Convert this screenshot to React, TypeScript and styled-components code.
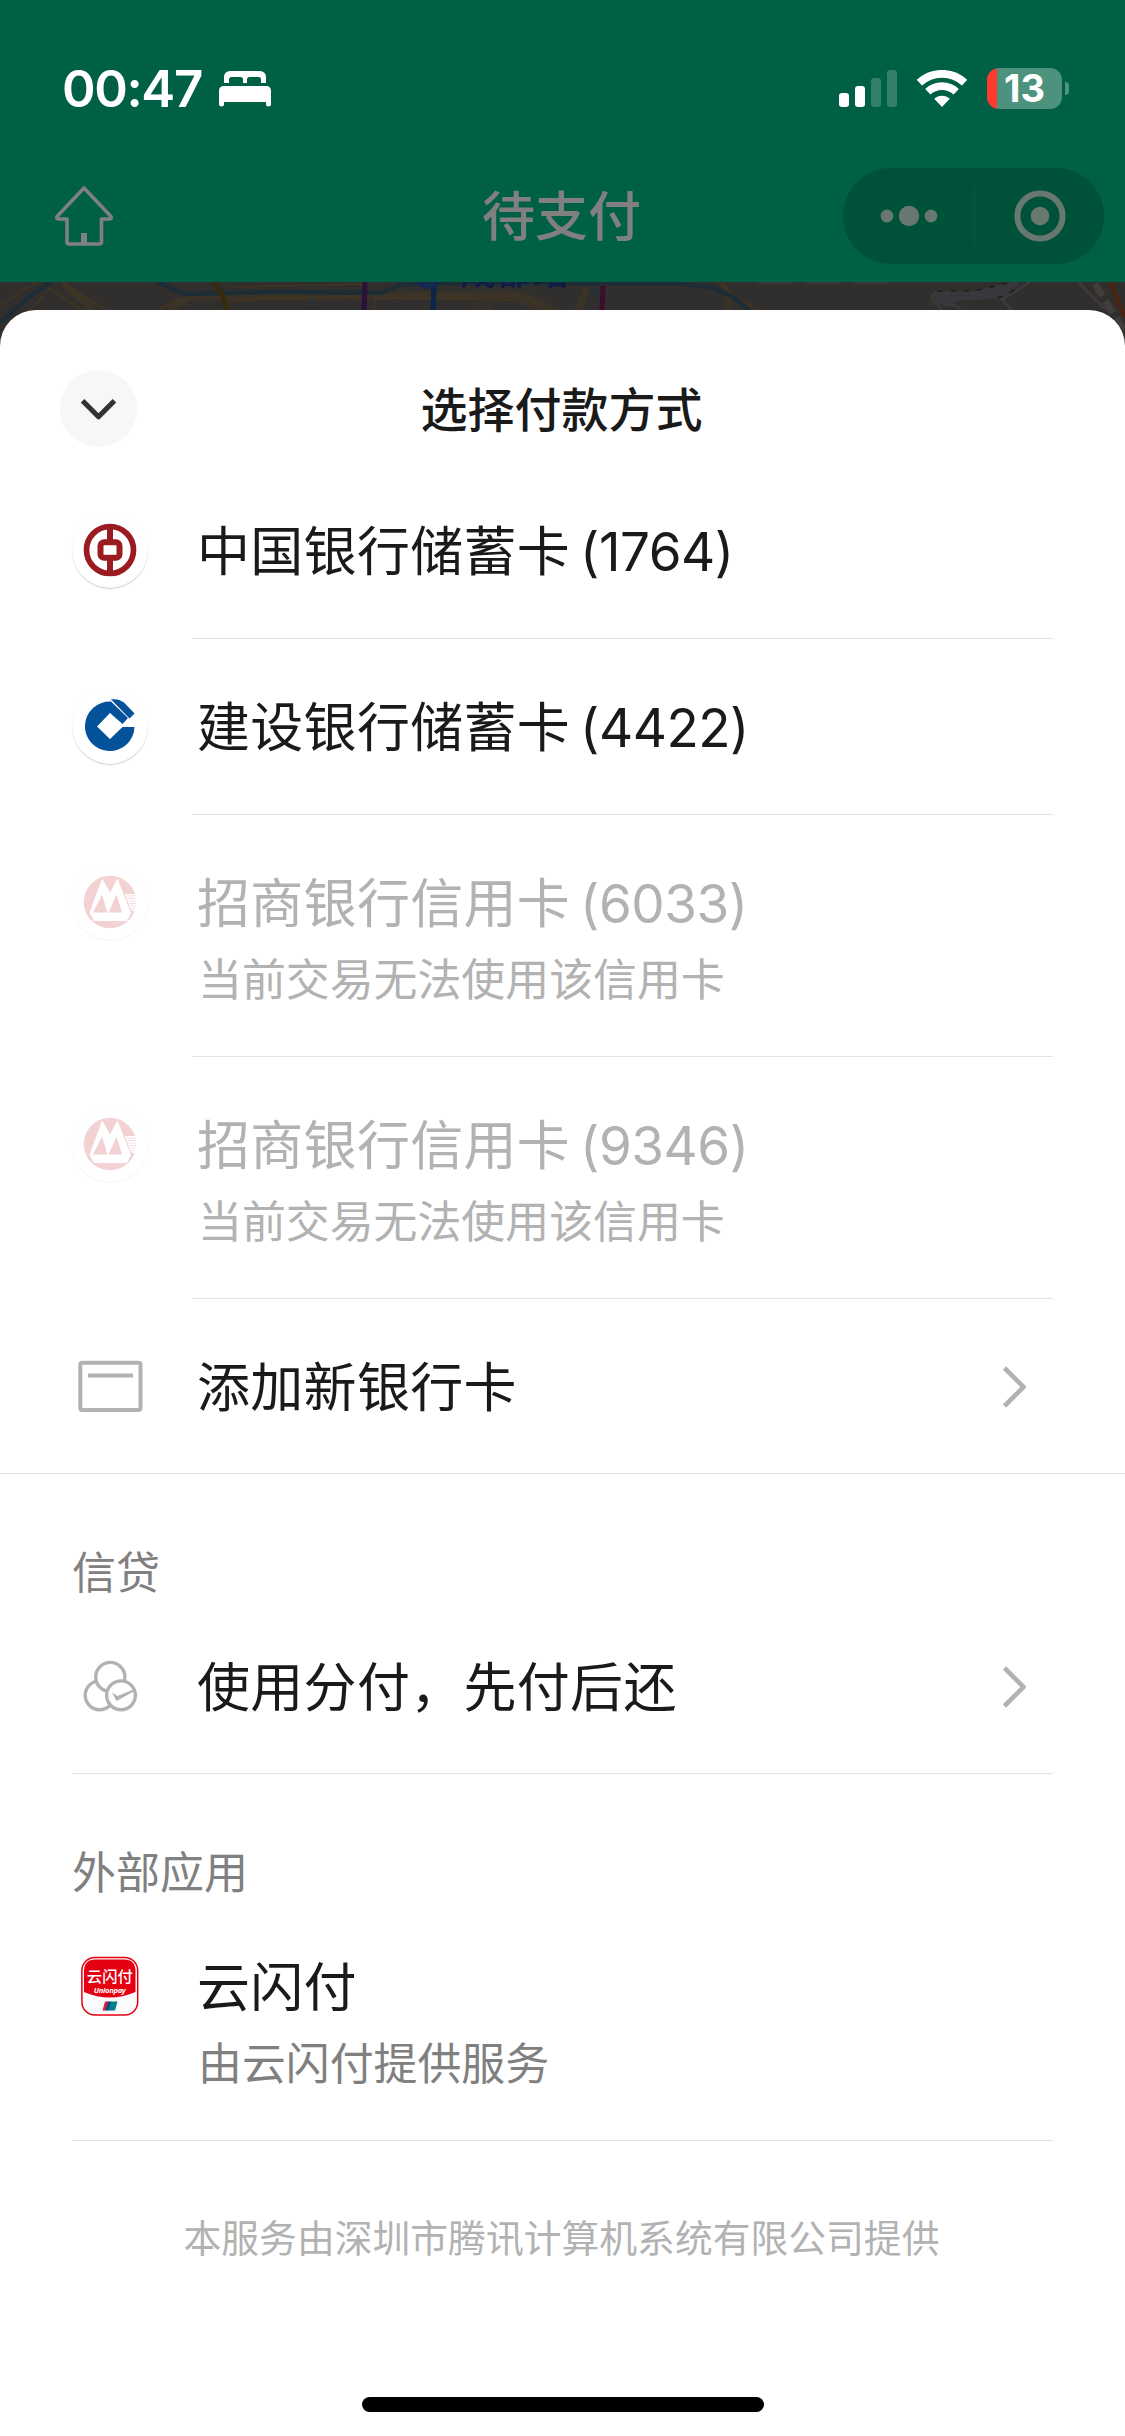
import React from "react";
import styled, { createGlobalStyle } from "styled-components";

const FONT = `Inter, "Noto Sans CJK SC", sans-serif`;

const GlobalStyle = createGlobalStyle`
  *, *::before, *::after { box-sizing: border-box; }
  body { margin: 0; background: #fff; font-family: ${FONT}; }
`;

const Screen = styled.div`
  width: 1125px;
  height: 2436px;
  display: flex;
  flex-direction: column;
  overflow: hidden;
  background: #302f2d;
`;

const Header = styled.header`
  height: 282px;
  flex: none;
  background: #006045;
`;

const StatusBar = styled.div`
  height: 132px;
  padding: 45px 56px 0 62px;
  display: flex;
  align-items: center;
  justify-content: space-between;
`;

const StatusGroup = styled.div<{ $gap: number }>`
  display: flex;
  align-items: center;
  gap: ${(p) => p.$gap}px;
`;

const Clock = styled.span`
  width: 142px;
  font-size: 51px;
  line-height: 60px;
  font-weight: 600;
  letter-spacing: -1.4px;
  color: #fff;
  white-space: nowrap;
`;

const Battery = styled.div`
  display: flex;
  align-items: center;
  gap: 3px;
`;

const BatteryBody = styled.div`
  width: 75px;
  height: 41px;
  border-radius: 12px;
  background: linear-gradient(to right, #ff3b30 10px, #4d927d 10px);
  color: #fff;
  font-size: 38px;
  line-height: 41px;
  font-weight: 700;
  text-align: center;
`;

const BatteryTip = styled.div`
  width: 4px;
  height: 13px;
  border-radius: 0 4px 4px 0;
  background: #4d927d;
`;

const NavBar = styled.nav`
  height: 150px;
  padding: 18px 21px 0;
  display: grid;
  grid-template-columns: 1fr auto 1fr;
  align-items: center;
`;

const HomeButton = styled.div`
  margin-left: 33px;
  display: flex;
`;

const NavTitle = styled.h1`
  margin: 2px 2px 0 0;
  font-size: 53px;
  line-height: 74px;
  font-weight: 500;
  color: #808080;
`;

const Capsule = styled.div`
  justify-self: end;
  width: 261px;
  height: 96px;
  border-radius: 48px;
  background: #00513a;
  display: grid;
  grid-template-columns: 131px 1px 1fr;
  align-items: center;
  justify-items: center;
`;

const CapsuleDivider = styled.div`
  width: 1px;
  height: 60px;
  background: #0a5a43;
`;

const MapStrip = styled.div`
  height: 64px;
  flex: none;
  display: flex;
`;

const Sheet = styled.main`
  flex: 1;
  margin-top: -36px;
  border-radius: 36px 36px 0 0;
  background: #fff;
  position: relative;
  display: flex;
  flex-direction: column;
`;

const SheetHeader = styled.div`
  height: 153px;
  padding: 44px 60px 0;
  display: grid;
  grid-template-columns: 77px 1fr 77px;
  align-items: center;
`;

const CloseButton = styled.button`
  width: 77px;
  height: 77px;
  padding: 0;
  border: 0;
  border-radius: 50%;
  background: #f7f7f7;
  display: flex;
  align-items: center;
  justify-content: center;
`;

const SheetTitle = styled.h2`
  margin: 3px 2px 0 0;
  text-align: center;
  font-size: 47px;
  line-height: 66px;
  font-weight: 450;
  color: #1a1a1a;
`;

type Divider = "content" | "row" | "bleed";

const Row = styled.div<{ $height: number; $divider: Divider }>`
  height: ${(p) => p.$height}px;
  margin: ${(p) => (p.$divider === "bleed" ? "0" : "0 72px")};
  padding: ${(p) => (p.$divider === "bleed" ? "0 72px" : "0")};
  border-bottom: ${(p) => (p.$divider === "content" ? "0" : "1px solid #e3e3e3")};
  display: flex;
`;

const IconSlot = styled.div<{ $tray?: boolean; $faded?: boolean }>`
  flex: none;
  width: 76px;
  height: 76px;
  margin: 49px 44px 0 0;
  border-radius: 50%;
  display: flex;
  align-items: center;
  justify-content: center;
  box-shadow: ${(p) => (p.$tray ? "0 1px 1px rgba(0,0,0,0.2)" : "none")};
  opacity: ${(p) => (p.$faded ? 0.2 : 1)};
`;

const Content = styled.div<{ $divided: boolean }>`
  flex: 1;
  padding: 52px 26px 0 5px;
  border-bottom: ${(p) => (p.$divided ? "1px solid #e3e3e3" : "0")};
  display: flex;
  justify-content: space-between;
`;

const Labels = styled.div`
  display: flex;
  flex-direction: column;
  gap: 9px;
`;

const Title = styled.div<{ $disabled?: boolean }>`
  font-size: 53px;
  line-height: 74px;
  letter-spacing: 0.3px;
  color: ${(p) => (p.$disabled ? "#b2b2b2" : "#1a1a1a")};
  white-space: nowrap;
`;

const CardNumber = styled.span`
  margin-left: 10px;
  letter-spacing: -0.5px;
`;

const Subtitle = styled.div<{ $color: string }>`
  font-size: 43.9px;
  line-height: 61px;
  padding-left: 1px;
  color: ${(p) => p.$color};
  white-space: nowrap;
`;

const Arrow = styled.div`
  height: 72px;
  display: flex;
  align-items: center;
`;

const SectionLabel = styled.h3`
  margin: 0;
  height: 125px;
  padding: 73px 72px 0;
  font-size: 44px;
  line-height: 52px;
  font-weight: 400;
  color: #808080;
`;

const Footer = styled.footer`
  flex: 1;
  padding: 71px 0 24px;
  display: flex;
  flex-direction: column;
  align-items: center;
  justify-content: space-between;
`;

const Provider = styled.p`
  margin: 0 2px 0 0;
  font-size: 37.8px;
  line-height: 53px;
  color: #b2b2b2;
`;

const HomeIndicator = styled.div`
  width: 402px;
  height: 15px;
  border-radius: 8px;
  background: #000;
`;

const BedIcon = () => (
  <svg width="52" height="36" viewBox="0 0 52 36" fill="#fff">
    <path d="M5 12V6.5Q5 0 11.500 0H40.500Q47 0 47 6.500V12H42V8.500Q42 6 39.500 6H30.500Q28 6 28 8.500V12H24V8.500Q24 6 21.500 6H12.500Q10 6 10 8.500V12Z" />
    <path d="M0 20Q0 15 5 15H47Q52 15 52 20V33.500Q52 35.500 49.500 35.500Q47 35.500 47 33.500V31H5V33.500Q5 35.500 2.500 35.500Q0 35.500 0 33.500Z" />
  </svg>
);

const SignalIcon = () => (
  <svg width="58" height="38" viewBox="0 0 58 38" fill="#fff">
    <rect x="0" y="23" width="10" height="14" rx="3" />
    <rect x="16" y="16" width="10" height="21" rx="3" />
    <rect x="32" y="8" width="10" height="29" rx="3" opacity="0.2" />
    <rect x="48" y="0" width="10" height="37" rx="3" opacity="0.2" />
  </svg>
);

const WifiIcon = () => (
  <svg width="52" height="38" viewBox="-26 -37 52 38" fill="none" stroke="#fff">
    <path d="M-22.600 -24.300A33.200 33.200 0 0 1 22.600 -24.300" strokeWidth="7.800" />
    <path d="M-14.200 -15.200A20.800 20.800 0 0 1 14.200 -15.200" strokeWidth="7.700" />
    <path d="M0 0L-7.800 -8.200A11.300 11.300 0 0 1 7.800 -8.200Z" fill="#fff" stroke="none" />
  </svg>
);

const HomeIcon = () => (
  <svg width="60" height="62" viewBox="0 0 60 62" fill="none" stroke="#808080" strokeWidth="3.600" strokeLinejoin="round">
    <path d="M30 3L57 31.500Q58 34 55.500 34H47.500V57Q47.500 59 45.500 59H15Q13 59 13 57V34H4.500Q2 34 3 31.500Z" />
    <path d="M30 59V48" strokeWidth="6" />
  </svg>
);

const DotsIcon = () => (
  <svg width="58" height="22" viewBox="-29 -11 58 22" fill="#677870">
    <circle cx="-22" r="6.400" />
    <circle r="10.200" />
    <circle cx="22" r="6.400" />
  </svg>
);

const TargetIcon = () => (
  <svg width="54" height="54" viewBox="-27 -27 54 54">
    <circle r="22.600" fill="none" stroke="#677870" strokeWidth="6" />
    <circle r="9.300" fill="#677870" />
  </svg>
);

const MapDrawing = () => (
  <svg width="1125" height="64" viewBox="0 0 1125 64" fill="none">
    <path d="M64 2L92 27M168 28L190 15L520 13L560 32M578 30L586 6M722 0L728 12V30" stroke="#453820" strokeWidth="7" opacity="0.55" />
    <g stroke="#45341f" strokeWidth="1.500">
      <path d="M0 24L24 8L38 0M8 50L50 7L82 28M62 0L106 28M160 27L182 15M230 5L362 2M226 20L262 17L358 15M375 26V16L520 18L560 40M480 28V16M490 28V16" />
      <path d="M718 0L735 14L757 28" />
    </g>
    <path d="M0 41L28 16L50 0M158 0L185 12L280 10L381 11L400 3L430 1H680L713 6L735 16L748 28" stroke="#1d2c35" strokeWidth="4.500" />
    <path d="M214 0L222 13L228 30" stroke="#382a0c" strokeWidth="5" />
    <path d="M365 0L364 30" stroke="#2d1039" strokeWidth="5" />
    <path d="M434 4L433 30" stroke="#0b244a" strokeWidth="5" />
    <path d="M603 4L602 30" stroke="#3d0d2c" strokeWidth="5" />
    <circle cx="428" cy="-9" r="16" fill="#162750" />
    <path d="M312 16V28M315 0V4M590 6L600 14" stroke="#25313b" strokeWidth="3" />
    <path d="M758 1H900" stroke="#3a3938" strokeWidth="2" strokeDasharray="34 14" />
    <path d="M934 9H974L1012 0H1020L1003 17L960 18L945 25L935 18Z" fill="#37383b" />
    <path d="M936 10A6 6 0 0 0 936 21L942 28M960 26L945 20M1030 0L1002 18L1012 28M1078 0L1106 28" stroke="#3c3b3a" strokeWidth="2.500" />
    <path d="M938 9H974L1012 0M998 16L1015 8" stroke="#1c1c1b" strokeWidth="1.500" strokeDasharray="5 8" />
    <path d="M1095 2L1125 50" stroke="#403d3a" strokeWidth="7" strokeDasharray="14 6" />
    <path d="M1110 0L1125 36" stroke="#4a2410" strokeWidth="4.500" />
    <text x="460" y="3" fontFamily={FONT} fontSize="36" fontWeight="500" fill="#101c45">成都站</text>
  </svg>
);

const ChevronDown = () => (
  <svg width="37" height="25" viewBox="0 0 36 24" fill="none" stroke="#333" strokeWidth="5" strokeLinejoin="round">
    <path d="M2.500 4.500L18 20L33.500 4.500" />
  </svg>
);

const ChevronRight = () => (
  <svg width="25" height="44" viewBox="0 0 25 44" fill="none" stroke="#b2b2b2" strokeWidth="4.600" strokeLinejoin="round">
    <path d="M2.500 3L21.500 22L2.500 41" />
  </svg>
);

const BankOfChinaLogo = () => (
  <svg width="54" height="54" viewBox="-27 -27 54 54">
    <g fill="none" stroke="#9b1c20">
      <circle r="23.500" strokeWidth="5.700" />
      <path d="M0 -23V-7M0 23V7" strokeWidth="6" />
      <rect x="-9.500" y="-7.700" width="19" height="15.400" rx="3.500" strokeWidth="6" />
    </g>
  </svg>
);

const ConstructionBankLogo = () => (
  <svg width="54" height="54" viewBox="-27 -27 54 54" fill="#04529a">
    <path d="M1 -24.500L18 -8L12.500 -2L0 -13L-13 0.500L0 13L12.500 1H24.500A24.800 24.800 0 1 1 1 -24.500Z" />
    <path d="M0.500 -26.500Q8 -28 14 -23.500L24.500 -12.500L19.500 -7.500L4 -23.500Q2.500 -25.500 0.500 -26.500Z" />
  </svg>
);

const MerchantsBankLogo = () => (
  <svg width="54" height="54" viewBox="-27 -27 54 54">
    <circle r="26.300" fill="#c8242b" />
    <path d="M-7.800 -23.500L-20.500 10.500L-16 19H17L21 11L7.500 -23.500L0 -9.500Z" fill="#fff" />
    <path d="M-8 -7.500L-17 10.500H-2.500ZM6.500 -7.500L-1.500 10.500H12Z" fill="#c8242b" />
    <path d="M15 -8H27V9H22L20 6Z" fill="#fff" />
    <path d="M16.500 -6H25.500M17.500 -3.500H26M18.500 -1H26M19.500 1.500H26M20.500 4H25.500M21.500 6.500H25" stroke="#c8242b" strokeWidth="1.200" opacity="0.75" />
  </svg>
);

const NewCardIcon = () => (
  <svg width="66" height="54" viewBox="-33 -27 66 54" fill="none" stroke="#b2b2b2" strokeWidth="4">
    <rect x="-29.700" y="-23.300" width="60.200" height="47.300" rx="2" />
    <path d="M-22 -10.500H23" />
  </svg>
);

const CreditIcon = () => (
  <svg width="56" height="56" viewBox="-28 -28 56 56" fill="#fff" stroke="#b2b2b2" strokeWidth="3.400">
    <circle cx="-10.400" cy="9.300" r="14.400" />
    <circle cx="0.300" cy="-9" r="14.600" />
    <circle cx="11" cy="9.300" r="14.400" />
    <path d="M2 6.500L7.500 10L23.500 3.500L24.500 5L6.500 15Z" fill="#b2b2b2" stroke="none" />
  </svg>
);

const UnionPayLogo = () => (
  <svg width="58" height="60" viewBox="0 0 58 60">
    <rect x="0.900" y="1.400" width="55.800" height="57.700" rx="13" fill="#fbfbfb" stroke="#e50012" strokeWidth="1.500" />
    <path d="M3 15Q3 3.500 14.500 3.500H43Q54.500 3.500 54.500 15V36Q28.800 47 3 36Z" fill="#e50012" />
    <text x="28.800" y="26" textAnchor="middle" fontFamily={FONT} fontSize="15.300" fontWeight="500" fill="#fff">云闪付</text>
    <text x="28.800" y="36.500" textAnchor="middle" fontFamily={`"Open Sans", sans-serif`} fontSize="7.600" fontWeight="700" fontStyle="italic" fill="#fff" textLength="32">Unionpay</text>
    <path d="M24 45.500H28L25.500 54.500H21.500Z" fill="#d8203a" />
    <path d="M27 45.500H31L28.500 54.500H24.500Z" fill="#00508e" />
    <path d="M30.500 45.500H36.500L34 54.500H28Z" fill="#008089" />
  </svg>
);

interface Method {
  id: string;
  title: string;
  number?: string;
  subtitle?: string;
  disabled?: boolean;
  tray?: boolean;
  arrow?: boolean;
  divider: Divider;
  height: number;
  icon: React.ReactNode;
}

const cards: Method[] = [
  { id: "boc", title: "中国银行储蓄卡", number: "(1764)", tray: true, divider: "content", height: 176, icon: <BankOfChinaLogo /> },
  { id: "ccb", title: "建设银行储蓄卡", number: "(4422)", tray: true, divider: "content", height: 176, icon: <ConstructionBankLogo /> },
  { id: "cmb-6033", title: "招商银行信用卡", number: "(6033)", subtitle: "当前交易无法使用该信用卡", disabled: true, tray: true, divider: "content", height: 242, icon: <MerchantsBankLogo /> },
  { id: "cmb-9346", title: "招商银行信用卡", number: "(9346)", subtitle: "当前交易无法使用该信用卡", disabled: true, tray: true, divider: "content", height: 242, icon: <MerchantsBankLogo /> },
  { id: "new", title: "添加新银行卡", arrow: true, divider: "bleed", height: 175, icon: <NewCardIcon /> },
];

const credit: Method = { id: "fenfu", title: "使用分付，先付后还", arrow: true, divider: "row", height: 175, icon: <CreditIcon /> };

const external: Method = { id: "unionpay", title: "云闪付", subtitle: "由云闪付提供服务", divider: "row", height: 242, icon: <UnionPayLogo /> };

const MethodRow = ({ method }: { method: Method }) => (
  <Row $height={method.height} $divider={method.divider}>
    <IconSlot $tray={method.tray} $faded={method.disabled}>{method.icon}</IconSlot>
    <Content $divided={method.divider === "content"}>
      <Labels>
        <Title $disabled={method.disabled}>
          {method.title}
          {method.number && <CardNumber>{method.number}</CardNumber>}
        </Title>
        {method.subtitle && (
          <Subtitle $color={method.disabled ? "#b2b2b2" : "#808080"}>{method.subtitle}</Subtitle>
        )}
      </Labels>
      {method.arrow && <Arrow><ChevronRight /></Arrow>}
    </Content>
  </Row>
);

export default function App() {
  return (
    <Screen>
      <GlobalStyle />
      <Header>
        <StatusBar>
          <StatusGroup $gap={15}>
            <Clock>00:47</Clock>
            <BedIcon />
          </StatusGroup>
          <StatusGroup $gap={19}>
            <SignalIcon />
            <WifiIcon />
            <Battery>
              <BatteryBody>13</BatteryBody>
              <BatteryTip />
            </Battery>
          </StatusGroup>
        </StatusBar>
        <NavBar>
          <HomeButton><HomeIcon /></HomeButton>
          <NavTitle>待支付</NavTitle>
          <Capsule>
            <DotsIcon />
            <CapsuleDivider />
            <TargetIcon />
          </Capsule>
        </NavBar>
      </Header>
      <MapStrip><MapDrawing /></MapStrip>
      <Sheet>
        <SheetHeader>
          <CloseButton aria-label="关闭"><ChevronDown /></CloseButton>
          <SheetTitle>选择付款方式</SheetTitle>
        </SheetHeader>
        {cards.map((m) => <MethodRow key={m.id} method={m} />)}
        <SectionLabel>信贷</SectionLabel>
        <MethodRow method={credit} />
        <SectionLabel>外部应用</SectionLabel>
        <MethodRow method={external} />
        <Footer>
          <Provider>本服务由深圳市腾讯计算机系统有限公司提供</Provider>
          <HomeIndicator />
        </Footer>
      </Sheet>
    </Screen>
  );
}
